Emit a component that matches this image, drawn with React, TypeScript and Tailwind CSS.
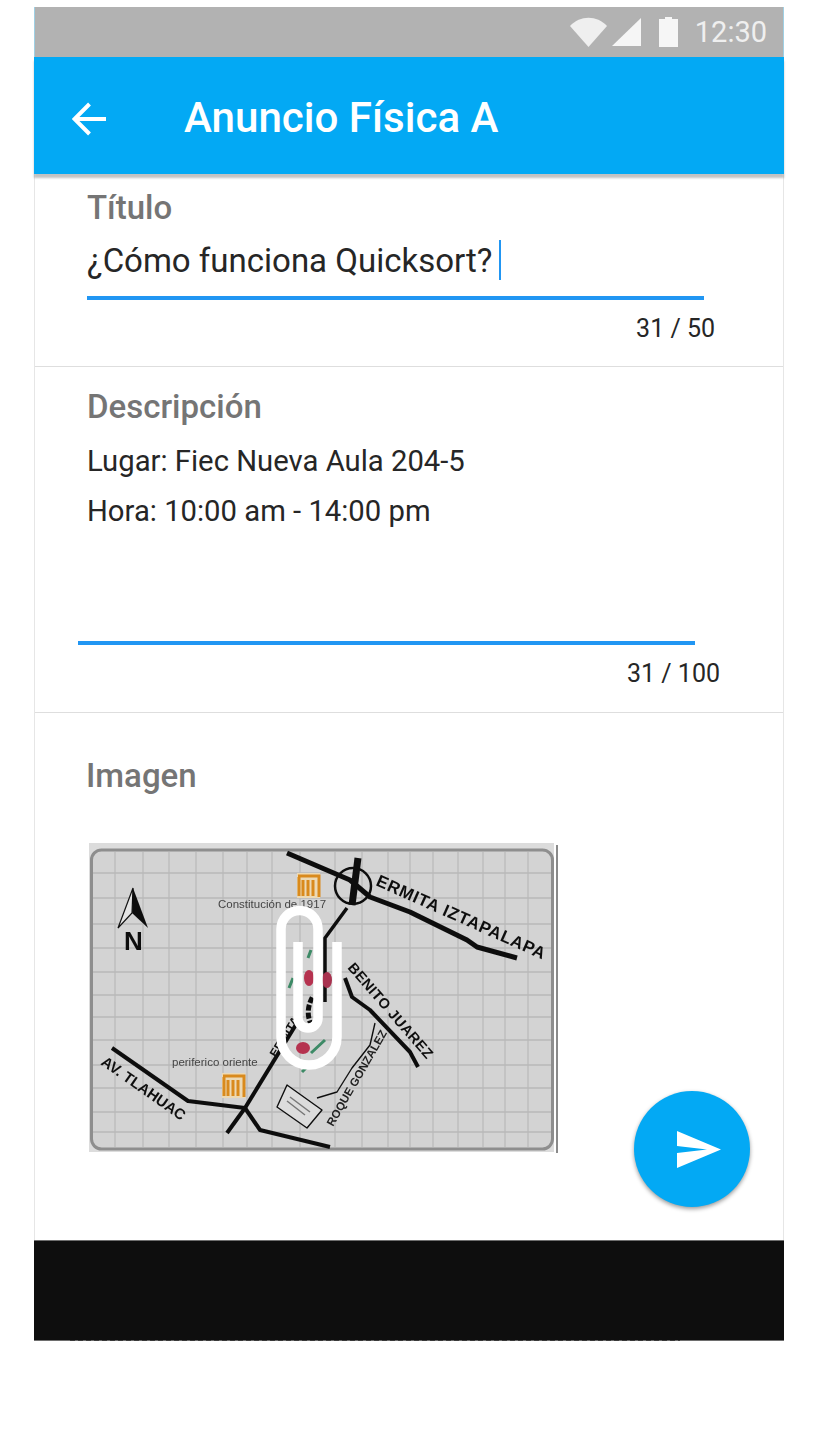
const roboto = "font-['Roboto',sans-serif]"

const gridX = [115, 143, 169, 196, 223, 247, 272, 300, 335, 362, 388, 410, 433, 458, 483, 505, 528]
const gridY = [873, 898, 924, 948, 972, 995, 1017, 1040, 1065, 1088, 1112, 1132]

function MetroLogo({ x, y }: { x: number; y: number }) {
  return (
    <g>
      <rect x={x} y={y} width="23" height="25" fill="#ecd9b4" />
      <path d={`M${x + 1} ${y + 3} H${x + 22} V${y + 24} M${x + 6} ${y + 7} V${y + 23} M${x + 11} ${y + 7} V${y + 23} M${x + 16} ${y + 7} V${y + 23} M${x + 2} ${y + 4} V${y + 23}`} stroke="#d98a1e" strokeWidth="3" fill="none" />
    </g>
  )
}

function MapPicture() {
  return (
    <svg viewBox="86 840 476 316" className="block h-[316px] w-[476px]">
      <defs>
        <filter id="soft" x="-5%" y="-5%" width="110%" height="110%">
          <feGaussianBlur stdDeviation="0.7" />
        </filter>
      </defs>
      <g filter="url(#soft)" fontFamily="'Liberation Sans', sans-serif">
        <rect x="89" y="843" width="465" height="309" fill="#dcdcdc" />
        <rect x="91.5" y="850" width="461" height="299" rx="10" fill="#d3d3d3" stroke="#8e8e8e" strokeWidth="3" />
        {gridX.map((x) => (
          <line key={x} x1={x} x2={x} y1="852" y2="1147" stroke="#b6b6b6" strokeWidth="1.1" />
        ))}
        {gridY.map((y) => (
          <line key={y} x1="93" x2="551" y1={y} y2={y} stroke="#b9b9b9" strokeWidth="1.3" />
        ))}

        <g fill="none" stroke="#111" strokeLinejoin="round">
          <path d="M287 853 L350 880 L370 897 L410 912 L467 940 L477 947 L517 958" strokeWidth="5" />
          <circle cx="353" cy="886" r="18" strokeWidth="2.5" />
          <path d="M358 858 L352 905" strokeWidth="7" />
          <path d="M347 908 L325 938 V1002" strokeWidth="3.5" />
          <path d="M300 1018 L245 1108 L227 1133" strokeWidth="4" />
          <path d="M112 1048 L188 1101 L245 1108 L260 1130 L330 1147" strokeWidth="4" />
          <path d="M345 978 L352 997 L370 1010 L410 1052 L418 1067" strokeWidth="4" />
          <path d="M375 1023 L370 1045 L352 1068 L337 1092 L317 1098" strokeWidth="1.4" />
          <path d="M287 1085 L322 1110 L307 1128 L277 1107 Z" fill="#dcdcdc" strokeWidth="1.4" />
          <path d="M290 1097 L310 1112 M287 1101 L305 1115" stroke="#777" strokeWidth="1.5" />
        </g>

        <path d="M133 888 L118 928 L132 913 Z" fill="#e4e4e4" stroke="#111" strokeWidth="1.2" />
        <path d="M133 888 L148 928 L132 913 Z" fill="#111" />
        <text x="124" y="950" fontSize="26" fontWeight="700" fill="#111">N</text>

        <MetroLogo x={297} y={873} />
        <MetroLogo x={222} y={1073} />

        <text x="218" y="908" fontSize="11.5" fill="#444">Constitución de 1917</text>
        <text x="172" y="1066" fontSize="11.5" fill="#444">periferico oriente</text>
        <text x="375" y="885" fontSize="17" fontWeight="700" fill="#111" transform="rotate(24 375 885)" letterSpacing="0.7">ERMITA IZTAPALAPA</text>
        <text x="347" y="968" fontSize="14.5" fontWeight="700" fill="#111" transform="rotate(49 347 968)" letterSpacing="0.4">BENITO JUAREZ</text>
        <text x="333" y="1127" fontSize="11.5" fontWeight="700" fill="#222" transform="rotate(-60 333 1127)">ROQUE GONZALEZ</text>
        <text x="100" y="1064" fontSize="15" fontWeight="700" fill="#111" transform="rotate(35 100 1064)">AV. TLAHUAC</text>
        <text x="276" y="1058" fontSize="12" fontWeight="700" fill="#111" transform="rotate(-58 276 1058)">ERMITA</text>

        <ellipse cx="309" cy="978" rx="5" ry="8" fill="#b5324f" />
        <ellipse cx="327" cy="980" rx="5" ry="8" fill="#a8324f" />
        <ellipse cx="303" cy="1048" rx="7" ry="6" fill="#b5324f" />
        <path d="M289 988 L293 978 M308 958 L311 950 M311 1053 L325 1040 M302 1072 L308 1066" stroke="#3d8a66" strokeWidth="3" />
        <path d="M312 1026 Q304 1012 313 996" stroke="#111" strokeWidth="5" strokeDasharray="6 2" fill="none" />
      </g>

      <path d="M337 942 V1037 A28 28 0 0 1 281 1037 V929 A18.5 18.5 0 0 1 318 929 V1018 A10 10 0 0 1 298 1018 V942" fill="none" stroke="#fff" strokeWidth="9.5" />
      <rect x="556" y="845" width="2" height="308" fill="#8a8a8a" />
    </svg>
  )
}

export default function App() {
  return (
    <div className={`h-[1449px] w-[819px] overflow-hidden bg-white pl-[34px] pt-[7px] ${roboto}`}>
      <div className="relative w-[750px]">
        <div className="flex h-[50px] items-center justify-end border-x border-x-[#9fd0e4] bg-[#b2b2b2] pr-[16px]">
          <svg viewBox="0 0 37 30" className="h-[30px] w-[37px]">
            <path d="M0 9 C10 -2 27 -2 37 9 L18.5 30 Z" fill="#efefef" />
          </svg>
          <svg viewBox="0 0 29 28" className="ml-[5px] h-[28px] w-[29px]">
            <path d="M0 28 L29 0 V28 Z" fill="#f6f6f6" />
          </svg>
          <svg viewBox="0 0 19 30" className="ml-[18px] h-[30px] w-[19px]">
            <path d="M0 2 H6 V0 H13 V2 H19 V30 H0 Z" fill="#f6f6f6" />
          </svg>
          <span className="ml-[17px] pt-[1px] text-[29px] leading-none text-[#efefef]">12:30</span>
        </div>

        <div className="relative z-10 flex h-[117px] items-center bg-[#03a9f4] pl-[38px] pt-[6px] shadow-[0_4px_2px_rgba(0,0,0,0.24)]">
          <svg viewBox="0 0 34 34" className="h-[34px] w-[34px]">
            <path d="M34 17 H3 M17.5 2 L2.5 17 L17.5 32" fill="none" stroke="#fff" strokeWidth="4" />
          </svg>
          <h1 className="ml-[78px] text-[42.1px] font-medium leading-none text-white">Anuncio Física A</h1>
        </div>

        <div className="border-x border-x-[#e6e6e6]">
          <section className="h-[193px] border-b border-b-[#dedede] pl-[52px] pt-[14px]">
            <p className="text-[33px] font-medium leading-[40px] text-[#757575]">Título</p>
            <div className="mt-[8px] flex h-[64px] w-[617px] items-center border-b-4 border-b-[#2196f3] pb-[12px]">
              <span className="text-[33px] leading-none text-[#262626]">¿Cómo funciona Quicksort?</span>
              <span className="ml-[7px] h-[40px] w-[2px] bg-[#2196f3]" />
            </div>
            <p className="mt-[14px] w-[628px] text-right text-[25px] leading-[30px] text-[#262626]">31 / 50</p>
          </section>

          <section className="h-[346px] border-b border-b-[#dedede] pl-[43px] pt-[20px]">
            <p className="pl-[9px] text-[33px] font-medium leading-[40px] text-[#757575]">Descripción</p>
            <div className="mt-[9px] h-[209px] w-[617px] border-b-4 border-b-[#2196f3] pl-[9px] text-[29.25px] leading-[50px] text-[#262626]">
              <p>Lugar: Fiec Nueva Aula 204-5</p>
              <p>Hora: 10:00 am - 14:00 pm</p>
            </div>
            <p className="mt-[14px] w-[642px] text-right text-[25px] leading-[30px] text-[#262626]">31 / 100</p>
          </section>

          <section className="h-[527px] pl-[51px] pt-[43px]">
            <p className="text-[33px] font-medium leading-[40px] text-[#757575]">Imagen</p>
            <div className="mt-[44px]">
              <MapPicture />
            </div>
          </section>
        </div>

        <button className="absolute left-[600px] top-[1084px] flex h-[116px] w-[116px] items-center justify-center rounded-full bg-[#03a9f4] shadow-[0_2px_4px_rgba(0,0,0,0.4)]">
          <svg viewBox="0 0 44 37" className="ml-[14px] h-[37px] w-[44px]">
            <path d="M0 0 L44 18.5 L0 37 V22 L30 18.5 L0 15 Z" fill="#fff" />
          </svg>
        </button>

        <div className="relative h-[101px] border-y border-y-[#6e6e6e] bg-[#0e0e0e]">
          <div className="absolute bottom-[-1px] left-[36px] h-px w-[610px] bg-[repeating-linear-gradient(90deg,#3a3a3a_0_5px,#6e6e6e_5px_8px)]" />
        </div>
      </div>
    </div>
  )
}
